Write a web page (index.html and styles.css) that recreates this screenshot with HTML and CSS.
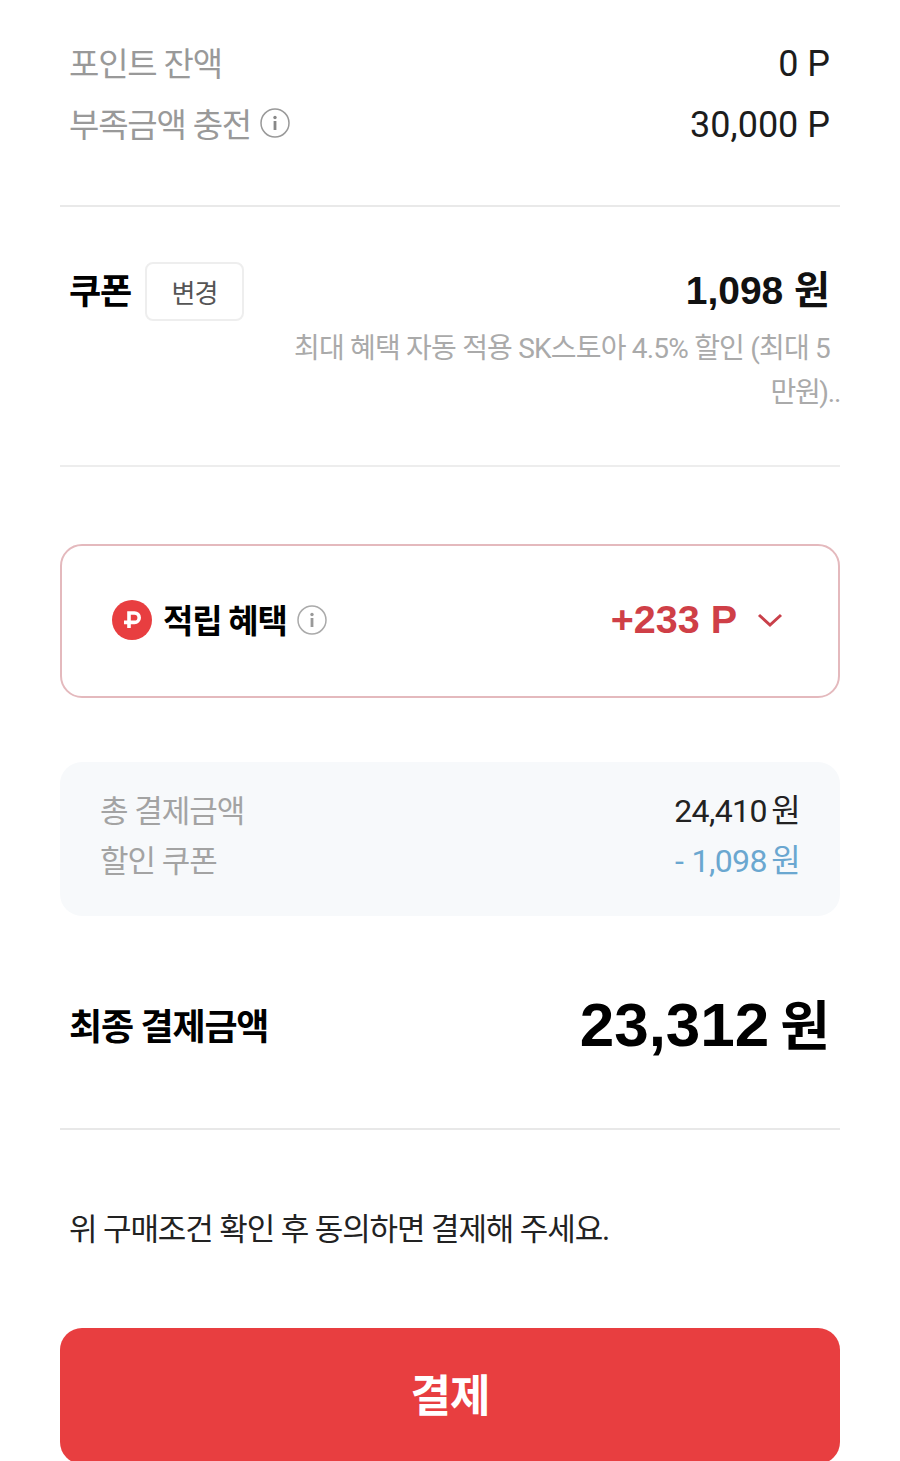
FILE: index.html
```html
<!DOCTYPE html>
<html lang="ko">
<head>
<meta charset="utf-8">
<title>결제</title>
<link rel="stylesheet" href="styles.css">
</head>
<body>
<main class="page">
  <section class="points">
    <div class="row point-row">
      <span class="label">포인트 잔액</span>
      <span class="value">0 P</span>
    </div>
    <div class="row point-row">
      <span class="label with-icon">부족금액 충전
        <svg class="info" viewBox="0 0 30 30"><circle cx="15" cy="15" r="14" fill="none" stroke="#999" stroke-width="1.5"/><circle cx="15" cy="9.5" r="1.7" fill="#888"/><rect x="13.6" y="13" width="2.8" height="9" fill="#888"/></svg>
      </span>
      <span class="value">30,000 P</span>
    </div>
  </section>

  <section class="coupon">
    <div class="row coupon-row">
      <div class="coupon-title"><strong class="heading coupon-heading">쿠폰</strong><button class="change">변경</button></div>
      <strong class="coupon-amount">1,098 원</strong>
    </div>
    <p class="coupon-note">최대 혜택 자동 적용 SK스토아 4.5% 할인 (최대 5<span class="note-overflow">만원)..</span></p>
  </section>

  <section class="benefit">
    <div class="benefit-left">
      <svg class="p-badge" viewBox="0 0 40 40"><circle cx="20" cy="20" r="20" fill="#e83e40"/><path d="M17 28V13h5.5a4.7 4.7 0 0 1 0 9.4H12" fill="none" stroke="#fff" stroke-width="3.6"/></svg>
      <strong class="heading">적립 혜택</strong>
      <svg class="info" viewBox="0 0 30 30"><circle cx="15" cy="15" r="14" fill="none" stroke="#aaa" stroke-width="1.5"/><circle cx="15" cy="9.5" r="1.7" fill="#999"/><rect x="13.6" y="13" width="2.8" height="9" fill="#999"/></svg>
    </div>
    <div class="benefit-right">
      <strong class="benefit-value">+233 P</strong>
      <svg class="chevron" viewBox="0 0 26 16"><path d="M2 3l11 10L24 3" fill="none" stroke="#c9404a" stroke-width="3"/></svg>
    </div>
  </section>

  <section class="summary">
    <div class="row summary-row"><span class="summary-label">총 결제금액</span><span class="summary-value">24,410 원</span></div>
    <div class="row summary-row"><span class="summary-label">할인 쿠폰</span><span class="summary-value discount"><span class="minus">-</span> 1,098 원</span></div>
  </section>

  <section class="row final">
    <strong class="heading final-heading">최종 결제금액</strong>
    <strong class="final-value">23,312<span class="final-unit">원</span></strong>
  </section>

  <p class="agree">위 구매조건 확인 후 동의하면 결제해 주세요.</p>

  <button class="pay">결제</button>
</main>
</body>
</html>
```

FILE: styles.css
```css
* { box-sizing: border-box; }
html, body { margin: 0; height: 1461px; overflow: hidden; background: #fff; }
body { font-family: Roboto, "Noto Sans CJK KR", sans-serif; color: #111; }
.page { padding: 0 60px; }
.row { display: flex; justify-content: space-between; align-items: center; }
strong { font-weight: 700; }

.points { padding: 33px 10px 50px 9px; border-bottom: 2px solid #e9e9e9; }
.point-row { height: 61px; }
.label { font-size: 33px; letter-spacing: -1.2px; color: #999; padding-bottom: 3px; }
.with-icon { display: flex; align-items: center; gap: 9px; }
.info { width: 30px; height: 30px; flex: none; }
.value { font-size: 36px; color: #1c1c1c; }

.coupon { padding: 54px 10px 50px 9px; border-bottom: 2px solid #ededed; }
.coupon-row { height: 58px; }
.coupon-title { display: flex; align-items: center; gap: 14px; }
.heading { font-size: 33px; font-weight: 700; letter-spacing: -1.2px; color: #000; padding-bottom: 2px; }
.coupon-heading { font-size: 35px; padding-bottom: 4px; }
.change { width: 99px; height: 59px; margin-top: 2px; border: 2px solid #eee; border-radius: 8px; background: #fff; font: 400 26px Roboto, "Noto Sans CJK KR", sans-serif; letter-spacing: -1px; color: #555; padding: 0; }
.coupon-amount { font-family: "Liberation Sans", "Noto Sans CJK KR", sans-serif; font-size: 39px; color: #111; margin-bottom: 6px; }
.coupon-note { margin: 8px 0 0; font-size: 28px; line-height: 44px; letter-spacing: -.8px; color: #aaa; text-align: right; }
.note-overflow { display: block; margin-right: -10px; letter-spacing: -1.3px; }

.benefit { margin-top: 77px; height: 154px; border: 2px solid #e4b9bd; border-radius: 22px; padding: 0 55px 2px 50px; display: flex; justify-content: space-between; align-items: center; }
.benefit-left { display: flex; align-items: center; gap: 11px; }
.p-badge { width: 40px; height: 40px; }
.benefit-left .info { margin-left: -1px; }
.benefit-right { display: flex; align-items: center; gap: 20px; }
.benefit-value { font: 700 39.5px "Liberation Sans", sans-serif; color: #cf3f47; margin-bottom: 2px; }
.chevron { width: 26px; height: 16px; }

.summary { margin-top: 64px; height: 154px; background: #f7f9fb; border-radius: 22px; padding: 21px 40px 0; }
.summary-row { height: 50px; }
.summary-label { font-size: 31px; letter-spacing: -1px; color: #a3a3a3; }
.summary-value { font-size: 32px; letter-spacing: -.6px; word-spacing: -3px; color: #222; }
.discount { color: #6aa7d0; }
.minus { margin-right: 4px; }

.final { padding: 0 10px 0 9px; height: 214px; border-bottom: 2px solid #e8e8e8; }
.final-heading { font-size: 36px; padding: 4px 0 0; }
.final-value { font-family: "Liberation Sans", "Noto Sans CJK KR", sans-serif; font-size: 62px; letter-spacing: 0; color: #000; margin: 0; }
.final-unit { font-size: 54px; margin-left: 11px; }

.agree { margin: 0; padding: 0 10px 6px 9px; height: 198px; display: flex; align-items: center; font-size: 31px; letter-spacing: -1.1px; color: #222; }

.pay { display: block; width: 100%; height: 136px; border: 0; border-radius: 22px; padding: 0 0 6px; background: #e83e40; color: #fff; font: 700 44px Roboto, "Noto Sans CJK KR", sans-serif; letter-spacing: -1px; }
```
